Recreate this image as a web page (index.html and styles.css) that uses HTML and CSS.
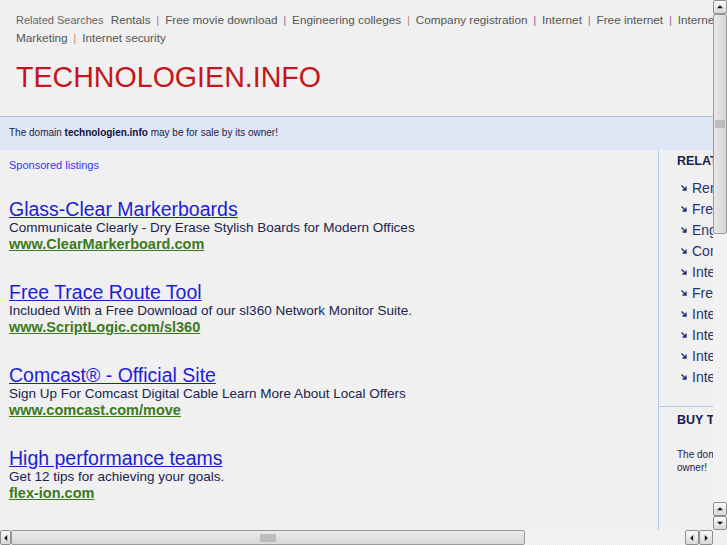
FILE: index.html
```html
<!DOCTYPE html>
<html lang="en">
<head>
    <meta charset="UTF-8">
    <title>technologien.info</title>
    <link rel="stylesheet" href="styles.css">
</head>
<body>

<div class="viewport">
    <div class="page">
        <div class="top">
            <div class="related">
                <span class="label">Related Searches</span>
                <a href="#">Rentals</a> <span class="sep s1">|</span>
                <a href="#">Free movie download</a> <span class="sep s2">|</span>
                <a href="#">Engineering colleges</a> <span class="sep s3">|</span>
                <a href="#">Company registration</a> <span class="sep s4">|</span>
                <a href="#">Internet</a> <span class="sep s1">|</span>
                <a href="#">Free internet</a> <span class="sep s2">|</span>
                <a href="#">Internet Marketing</a> <span class="sep s3">|</span>
                <a href="#">Internet security</a>
            </div>
            <h1 class="title">TECHNOLOGIEN.INFO</h1>
        </div>

        <div class="sale-bar"><span>The domain <b>technologien.info</b> may be for sale by its owner!</span></div>

        <div class="columns">
            <div class="main">
                <div class="sponsored">Sponsored listings</div>

                <div class="ad">
                    <a class="ad-title" href="#">Glass-Clear Markerboards</a>
                    <div class="ad-desc">Communicate Clearly - Dry Erase Stylish Boards for Modern Offices</div>
                    <a class="ad-url" href="#">www.ClearMarkerboard.com</a>
                </div>
                <div class="ad">
                    <a class="ad-title" href="#">Free Trace Route Tool</a>
                    <div class="ad-desc">Included With a Free Download of our sl360 Network Monitor Suite.</div>
                    <a class="ad-url" href="#">www.ScriptLogic.com/sl360</a>
                </div>
                <div class="ad">
                    <a class="ad-title" href="#">Comcast&reg; - Official Site</a>
                    <div class="ad-desc">Sign Up For Comcast Digital Cable Learn More About Local Offers</div>
                    <a class="ad-url" href="#">www.comcast.com/move</a>
                </div>
                <div class="ad">
                    <a class="ad-title" href="#">High performance teams</a>
                    <div class="ad-desc">Get 12 tips for achieving your goals.</div>
                    <a class="ad-url" href="#">flex-ion.com</a>
                </div>
            </div>

            <div class="side">
                <div class="side-block">
                    <h3>RELATED SEARCHES</h3>
                    <ul class="side-list">
                        <li><a href="#">Rentals</a></li>
                        <li><a href="#">Free movie download</a></li>
                        <li><a href="#">Engineering colleges</a></li>
                        <li><a href="#">Company registration</a></li>
                        <li><a href="#">Internet</a></li>
                        <li><a href="#">Free internet</a></li>
                        <li><a href="#">Internet Marketing</a></li>
                        <li><a href="#">Internet security</a></li>
                        <li><a href="#">Internet providers</a></li>
                        <li><a href="#">Internet service</a></li>
                    </ul>
                </div>
                <div class="side-block buy">
                    <h3>BUY THIS DOMAIN</h3>
                    <p>The domain technologien.info may be for sale by its owner!</p>
                </div>
            </div>
        </div>
    </div>
</div>

<!-- fake window scrollbars -->
<div class="vscroll">
    <div class="sb-btn up"></div>
    <div class="v-thumb"><span class="grip"></span></div>
    <div class="v-trough"></div>
    <div class="sb-btn up"></div>
    <div class="sb-btn down"></div>
</div>
<div class="hscroll">
    <div class="sb-btn left narrow"></div>
    <div class="h-thumb"><span class="grip"></span></div>
    <div class="h-trough"></div>
    <div class="sb-btn left"></div>
    <div class="sb-btn right"></div>
</div>
<div class="corner"></div>

</body>
</html>
```

FILE: styles.css
```css
* {
    box-sizing: border-box;
    margin: 0;
    padding: 0;
}
body {
    background-color: #f0f0f0;
    font-family: "Liberation Sans", Arial, sans-serif;
    overflow: hidden;
}
a {
    text-decoration: none;
}
.viewport {
    width: 713px;
    height: 530px;
    overflow: hidden;
}
.page {
    width: 940px;
}

/* header */
.top {
    padding: 11px 16px 0;
}
.related {
    width: 735px;
    font-size: 11.75px;
    line-height: 18px;
    color: #555;
}
.related .label {
    font-size: 11px;
    color: #666;
    margin-right: 4px;
}
.related a {
    color: #555;
}
.related .sep {
    margin: 0 2.5px;
}
.sep.s1 { color: #b07090; }
.sep.s2 { color: #9070b0; }
.sep.s3 { color: #c09070; }
.sep.s4 { color: #a060a0; }
.title {
    font-size: 28.6px;
    font-weight: normal;
    line-height: 32px;
    color: #c4161c;
    margin-top: 14px;
    margin-bottom: 23px;
}

.sale-bar {
    width: 713px;
    height: 34px;
    padding: 0 9px 3px;
    display: flex;
    align-items: center;
    background-color: #dfe6f5;
    border-top: 1px solid #a9bfe6;
    font-size: 10px;
    color: #1c1c4c;
}
.sale-bar b {
    color: #111140;
}

/* body columns */
.columns {
    display: flex;
}
.main {
    width: 658px;
    padding: 8px 9px 0;
}
.sponsored {
    font-size: 11px;
    line-height: 14px;
    color: #3535f0;
    margin-bottom: 27px;
}
.ad {
    margin-bottom: 29px;
}
.ad-title {
    display: block;
    font-size: 19.5px;
    line-height: 20px;
    color: #1d1dd6;
    text-decoration: underline;
}
.ad-desc {
    font-size: 13.5px;
    line-height: 17px;
    color: #20224e;
}
.ad-url {
    display: block;
    font-size: 14.5px;
    line-height: 17px;
    font-weight: bold;
    color: #3a7a1c;
    text-decoration: underline;
}

.side {
    width: 282px;
    height: 380px;
    border-left: 1px solid #b4c6ea;
}
.side-block {
    padding: 4px 18px 0;
}
.side-block h3 {
    font-size: 12.5px;
    line-height: 14px;
    color: #1a1a55;
}
.side-list {
    list-style: none;
    margin-top: 10px;
    padding-bottom: 18px;
    border-bottom: 1px solid #b4c6ea;
    margin-left: -18px;
    margin-right: -18px;
    padding-left: 22px;
}
.side-list li {
    font-size: 14px;
    line-height: 21px;
    display: flex;
    align-items: center;
}
.side-list li::before {
    content: "";
    width: 6px;
    height: 6px;
    margin-right: 5px;
    margin-top: -2px;
    background: url("data:image/svg+xml;utf8,<svg xmlns='http://www.w3.org/2000/svg' width='6' height='6'><path d='M0.5 0.5 L5 5 M5 1.5 V5 H1.5' stroke='%231a2a6a' stroke-width='1.3' fill='none'/></svg>") no-repeat;
}
.side-list a {
    color: #28336c;
}
.buy {
    padding-top: 6px;
}
.buy p {
    margin-top: 21px;
    width: 240px;
    font-size: 10px;
    line-height: 13px;
    color: #1c1c4c;
}

/* scrollbars */
.vscroll {
    position: fixed;
    top: 0;
    right: 0;
    width: 14px;
    height: 530px;
    display: flex;
    flex-direction: column;
    background: repeating-conic-gradient(#ececec 0 25%, #f8f8f8 0 50%) 0 0 / 2px 2px;
}
.hscroll {
    position: fixed;
    left: 0;
    bottom: 0;
    width: 713px;
    height: 15px;
    display: flex;
    background: repeating-conic-gradient(#ececec 0 25%, #f8f8f8 0 50%) 0 0 / 2px 2px;
}
.corner {
    position: fixed;
    right: 0;
    bottom: 0;
    width: 14px;
    height: 15px;
    background: #f0f0f0;
}
.sb-btn {
    position: relative;
    flex: none;
    width: 14px;
    height: 14px;
    border: 1px solid #8e8e8e;
    border-radius: 2px;
    background: linear-gradient(#fafafa, #d8d8d8);
}
.hscroll .sb-btn {
    height: 15px;
}
.sb-btn.narrow {
    width: 11px;
}
.sb-btn::after {
    content: "";
    position: absolute;
    left: 50%;
    top: 50%;
    width: 0;
    height: 0;
    border: 3px solid transparent;
}
.sb-btn.up::after {
    border-bottom-color: #111;
    border-top-width: 0;
    transform: translate(-50%, -60%);
}
.sb-btn.down::after {
    border-top-color: #111;
    border-bottom-width: 0;
    transform: translate(-50%, -40%);
}
.sb-btn.left::after {
    border-right-color: #111;
    border-left-width: 0;
    transform: translate(-60%, -50%);
}
.sb-btn.right::after {
    border-left-color: #111;
    border-right-width: 0;
    transform: translate(-40%, -50%);
}
.v-thumb, .h-thumb {
    flex: none;
    display: flex;
    align-items: center;
    justify-content: center;
    border: 1px solid #9a9a9a;
    border-radius: 2px;
    background: linear-gradient(90deg, #e8e8e8, #d6d6d6);
}
.v-thumb {
    height: 220px;
}
.h-thumb {
    width: 514px;
    background: linear-gradient(#ebebeb, #d8d8d8);
}
.v-trough, .h-trough {
    flex: 1;
}
.grip {
    width: 10px;
    height: 8px;
    background: radial-gradient(circle, #a8a8a8 0.6px, transparent 0.9px) 0 0 / 2px 2px;
}
.h-thumb .grip {
    width: 16px;
}
```
